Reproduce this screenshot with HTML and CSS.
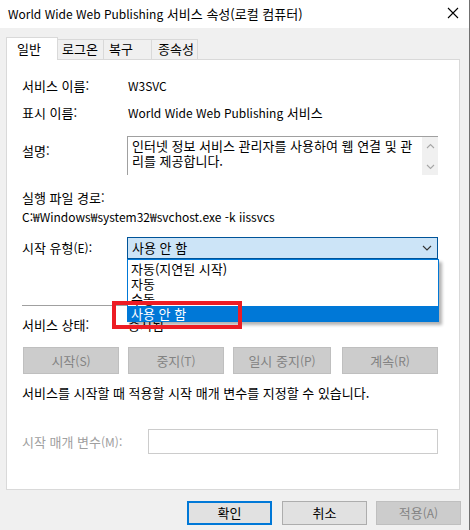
FILE: index.html
```html
<!DOCTYPE html>
<html lang="ko">
<head>
<meta charset="utf-8">
<title>World Wide Web Publishing 서비스 속성</title>
<link rel="stylesheet" href="styles.css">
</head>
<body>
<div class="window">
  <div class="titlebar">
    <span class="title"><span class="lat">World Wide Web Publishing</span> 서비스 속성(로컬 컴퓨터)</span>
    <svg class="close" width="12" height="12" viewBox="0 0 12 12"><path d="M1 1 L11 11 M11 1 L1 11" stroke="#000" stroke-width="1.1" fill="none"/></svg>
  </div>
  <div class="tabs">
    <div class="tab active">일반</div>
    <div class="tab tab-logon">로그온</div>
    <div class="tab tab-recovery">복구</div>
    <div class="tab tab-deps">종속성</div>
  </div>
  <div class="panel">
    <div class="row row-name"><span class="label">서비스 이름:</span><span class="value lat">W3SVC</span></div>
    <div class="row row-display"><span class="label">표시 이름:</span><span class="value"><span class="lat">World Wide Web Publishing</span> 서비스</span></div>
    <div class="row row-desc">
      <span class="label label-desc">설명:</span>
      <div class="descbox">
        <div class="desctext">인터넷 정보 서비스 관리자를 사용하여 웹 연결 및 관리를 제공합니다.</div>
        <div class="scrollbar">
          <svg width="9" height="6" viewBox="0 0 9 6"><path d="M1 5 L4.5 1.5 L8 5" stroke="#a6a6a6" stroke-width="1.1" fill="none"/></svg>
          <svg width="9" height="6" viewBox="0 0 9 6"><path d="M1 1 L4.5 4.5 L8 1" stroke="#a6a6a6" stroke-width="1.1" fill="none"/></svg>
        </div>
      </div>
    </div>
    <div class="row row-pathlabel"><span class="label-wide">실행 파일 경로:</span></div>
    <div class="row row-path"><span class="lat">C:₩Windows₩system32₩svchost.exe -k iissvcs</span></div>
    <div class="row row-start">
      <span class="label">시작 유형<span class="lat">(E):</span></span>
      <div class="combo-wrap">
        <div class="combo">
          <span>사용 안 함</span>
          <svg class="chev" width="10" height="6" viewBox="0 0 10 6"><path d="M1 1 L5 5 L9 1" stroke="#333" stroke-width="1.1" fill="none"/></svg>
        </div>
        <ul class="droplist">
          <li>자동(지연된 시작)</li>
          <li>자동</li>
          <li>수동</li>
          <li class="selected">사용 안 함</li>
        </ul>
        <div class="highlight-box"></div>
      </div>
    </div>
    <div class="separator"></div>
    <div class="row row-status"><span class="label">서비스 상태:</span><span class="value">중지됨</span></div>
    <div class="actions">
      <button class="btn disabled b-start">시작<span class="lat">(S)</span></button>
      <button class="btn disabled b-stop">중지<span class="lat">(T)</span></button>
      <button class="btn disabled b-pause">일시 중지<span class="lat">(P)</span></button>
      <button class="btn disabled b-resume">계속<span class="lat">(R)</span></button>
    </div>
    <div class="row row-hint">서비스를 시작할 때 적용할 시작 매개 변수를 지정할 수 있습니다.</div>
    <div class="row row-param">
      <span class="label-param">시작 매개 변수<span class="lat">(M):</span></span>
      <div class="param-input"></div>
    </div>
  </div>
  <div class="footer">
    <button class="fbtn default">확인</button>
    <button class="fbtn cancel">취소</button>
    <button class="fbtn disabled apply">적용<span class="lat">(A)</span></button>
  </div>
</div>
</body>
</html>
```

FILE: styles.css
```css
* { box-sizing: border-box; }
html, body {
  margin: 0;
  padding: 0;
  width: 470px;
  height: 530px;
  overflow: hidden;
}
body {
  font-family: "Noto Sans CJK KR", "Noto Sans", sans-serif;
  font-size: 13px;
  color: #000;
  background: #f0f0f0;
}
.lat { font-size: 12px; }
.window {
  width: 470px;
  height: 530px;
  background: #f0f0f0;
  border-right: 1px solid #707070;
}
.titlebar {
  height: 28px;
  background: #fff;
  display: flex;
  align-items: center;
  justify-content: space-between;
  padding: 0 10px 0 8px;
}
.title {
  line-height: 16px;
  margin-top: -1px;
  white-space: nowrap;
}
.close { display: block; margin-top: -2px; }

.tabs {
  display: flex;
  align-items: flex-end;
  margin-left: 6px;
  margin-top: 9px;
  height: 23px;
  margin-bottom: -1px;
}
.tab {
  height: 21px;
  border: 1px solid #d9d9d9;
  border-bottom: none;
  background: #f0f0f0;
  line-height: 16px;
  padding-top: 1px;
  margin-left: -1px;
  white-space: nowrap;
}
.tab.active {
  margin-left: 0;
  height: 23px;
  width: 52px;
  background: #fff;
  padding-top: 3px;
  padding-left: 10px;
  position: relative;
  z-index: 2;
}
.tab-logon { width: 47px; padding-left: 4px; }
.tab-recovery { width: 49px; padding-left: 5px; }
.tab-deps { width: 47px; padding-left: 6px; }

.panel {
  margin-left: 6px;
  width: 454px;
  height: 431px;
  background: #fff;
  border: 1px solid #d9d9d9;
  padding: 18px 21px 0 15px;
  position: relative;
  z-index: 1;
}
.row {
  display: flex;
  line-height: 16px;
  white-space: nowrap;
}
.label { width: 105px; flex: none; }
.value { padding-left: 1px; }
.row-display { margin-top: 11px; }
.row-desc { margin-top: 15px; align-items: flex-start; }
.label-desc { margin-top: 7px; }
.descbox {
  width: 311px;
  height: 39px;
  border-top: 1px solid #a0a0a0;
  border-left: 1px solid #a0a0a0;
  display: flex;
}
.desctext {
  flex: 1;
  white-space: normal;
  line-height: 15px;
  padding: 1px 2px 0 4px;
  word-break: break-all;
}
.scrollbar {
  width: 16px;
  flex: none;
  background: #f0f0f0;
  display: flex;
  flex-direction: column;
  align-items: center;
  justify-content: space-between;
  padding: 6px 0 5px;
}
.scrollbar svg { display: block; }
.row-pathlabel { margin-top: 15px; }
.row-path { margin-top: 3px; }
.row-start { margin-top: 12px; align-items: center; }
.combo-wrap {
  position: relative;
  width: 311px;
}
.combo {
  height: 22px;
  background: #cce4f7;
  border: 1px solid #005499;
  display: flex;
  align-items: center;
  justify-content: space-between;
  padding: 0 5px 0 4px;
  line-height: 16px;
}
.chev { display: block; }
.droplist {
  position: absolute;
  top: 22px;
  left: 0;
  width: 312px;
  margin: 0;
  padding: 1px 0 0;
  list-style: none;
  background: #fff;
  border: 1px solid #0078d7;
  box-shadow: 3px 3px 3px rgba(0, 0, 0, 0.3);
  z-index: 5;
}
.droplist li {
  height: 15px;
  line-height: 15px;
  padding-left: 3px;
}
.droplist li.selected {
  background: #0078d7;
  color: #fff;
}
.highlight-box {
  position: absolute;
  top: 64px;
  left: -15px;
  width: 130px;
  height: 28px;
  border: 4px solid #ed1c24;
  z-index: 6;
}
.separator {
  margin-top: 46px;
  height: 1px;
  background: #a0a0a0;
}
.row-status { margin-top: 11px; }
.actions {
  display: flex;
  margin-top: 14px;
}
.btn {
  font-family: inherit;
  font-size: 13px;
  height: 27px;
  width: 96px;
  padding: 0;
  border: 1px solid #bfbfbf;
  background: #cccccc;
  color: #838383;
  line-height: 16px;
}
.b-start { margin-left: 1px; }
.b-stop { margin-left: 9px; }
.b-pause { margin-left: 9px; width: 98px; }
.b-resume { margin-left: 11px; }
.row-hint { margin-top: 11px; }
.row-param { margin-top: 28px; align-items: center; }
.label-param { width: 126px; flex: none; color: #a0a0a0; }
.param-input {
  width: 290px;
  height: 25px;
  border: 1px solid #cccccc;
  background: #fff;
}

.footer {
  display: flex;
  justify-content: flex-end;
  padding-right: 8px;
  margin-top: 11px;
}
.fbtn {
  font-family: inherit;
  font-size: 13px;
  height: 24px;
  width: 85px;
  padding: 0;
  background: #e1e1e1;
  border: 1px solid #adadad;
  color: #000;
  line-height: 16px;
}
.fbtn.default { border: 2px solid #0078d7; }
.fbtn.cancel { margin-left: 10px; }
.fbtn.apply {
  margin-left: 9px;
  background: #cccccc;
  border-color: #bfbfbf;
  color: #838383;
}
```
